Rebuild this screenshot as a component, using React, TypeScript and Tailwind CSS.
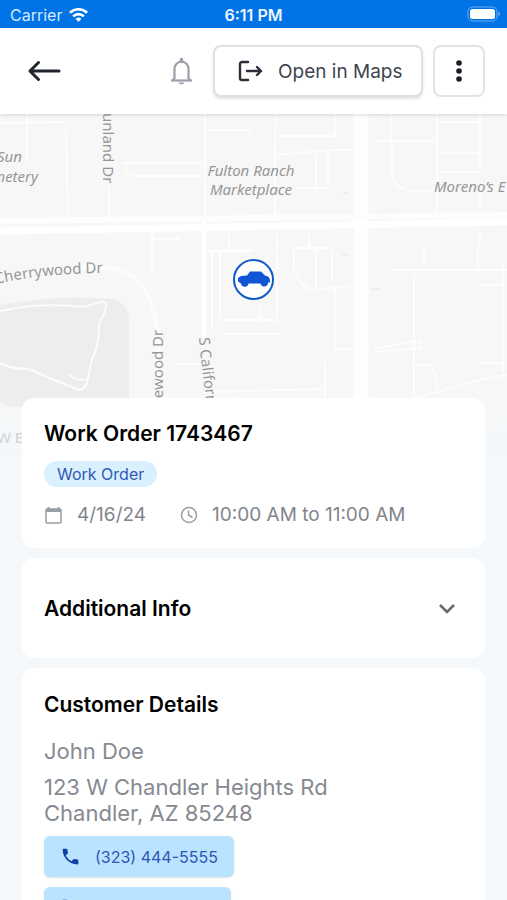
import React from "react";

const PHONE =
  "M6.62 10.79c1.44 2.83 3.76 5.14 6.59 6.59l2.2-2.2c.27-.27.67-.36 1.02-.24 1.12.37 2.33.57 3.57.57.55 0 1 .45 1 1V20c0 .55-.45 1-1 1-9.39 0-17-7.61-17-17 0-.55.45-1 1-1h3.5c.55 0 1 .45 1 1 0 1.25.2 2.45.57 3.57.11.35.03.74-.25 1.02l-2.2 2.2z";

function StatusBar() {
  return (
    <header className="grid h-[28px] shrink-0 grid-cols-3 items-center bg-[#0073e6] px-2.5 text-white">
      <div className="flex items-center gap-1.5 pt-0.5">
        <span className="text-[16px] leading-5 text-[#d5e9fc]">Carrier</span>
        <svg width="21" height="16" viewBox="0 0 22 16" fill="none" stroke="currentColor" strokeWidth="2.8">
          <path d="M2 5.6a13 13 0 0 1 18 0" />
          <path d="M5.4 9.4a8 8 0 0 1 11.2 0" />
          <path d="M11 15.2 8 12.2a4.300 4.300 0 0 1 6 0z" fill="currentColor" stroke="none" />
        </svg>
      </div>
      <time className="pt-0.5 text-center text-[16px] leading-5 font-semibold text-[#eef6ff]">6:11 PM</time>
      <svg className="-mr-1 justify-self-end" width="34" height="16" viewBox="0 0 34 16" aria-label="Battery full">
        <rect x="1" y="1" width="29" height="14" rx="4.500" fill="none" stroke="#6eb0f3" />
        <rect x="3" y="3" width="25" height="10" rx="2.500" fill="#fff" />
        <path d="M31.500 5.500v5c2-1 2-4 0-5z" fill="#6eb0f3" />
      </svg>
    </header>
  );
}

function Toolbar() {
  return (
    <nav className="relative z-10 flex h-[86px] shrink-0 items-center bg-white pr-[22px] pl-[27px] shadow-[0_1px_4px_rgba(0,0,0,0.14)]">
      <button aria-label="Back" className="text-[#20252e]">
        <svg width="35" height="24" viewBox="0 0 35 24" fill="none" stroke="currentColor" strokeWidth="3" strokeLinecap="round" strokeLinejoin="round">
          <path d="M32 12H3M11.500 3.500 3 12l8.500 8.500" />
        </svg>
      </button>
      <button aria-label="Notifications" className="mr-5 ml-auto text-[#9a9fa8]">
        <svg width="24" height="28" viewBox="0 0 24 28" fill="none" stroke="currentColor" strokeWidth="2.200">
          <path d="M5.500 22V12a7 7.500 0 0 1 14 0v10" />
          <path d="M2 23.500h21" strokeWidth="2.200" />
          <path d="M12.500 2.500v2" strokeWidth="3.400" strokeLinecap="round" />
          <path d="M9.500 25.500h6c-.6 2.400-5.400 2.400-6 0z" fill="currentColor" stroke="none" />
          <path d="m5 20-2.500 3.500H6zM20 20l2.500 3.500H19z" fill="currentColor" stroke="none" />
        </svg>
      </button>
      <button className="flex h-[52px] w-[210px] items-center gap-3.5 rounded-lg border-2 border-[#dfe0e3] bg-white pl-[22px] text-[#40454f] shadow-[0_2px_3px_rgba(0,0,0,0.12)]">
        <svg width="27" height="24" viewBox="0 0 27 24" fill="none" stroke="#2a2f39" strokeWidth="2.400" strokeLinecap="round" strokeLinejoin="round">
          <path d="M11 3H5a2 2 0 0 0-2 2v14a2 2 0 0 0 2 2h6M10 12h14M20 8l4 4-4 4" />
        </svg>
        <span className="pt-0.5 text-[19px] leading-6">Open in Maps</span>
      </button>
      <button aria-label="More options" className="ml-2.5 flex h-[52px] w-[52px] items-center justify-center rounded-lg border-2 border-[#e1e2e5] bg-white text-[#191d29]">
        <svg width="8" height="24" viewBox="0 0 8 24" fill="currentColor">
          <circle cx="4" cy="4" r="2.800" />
          <circle cx="4" cy="12" r="2.800" />
          <circle cx="4" cy="20" r="2.800" />
        </svg>
      </button>
    </nav>
  );
}

/* Map coordinates start at the top of the viewport, so the view box begins at y=114. */
function MapView() {
  return (
    <svg className="block h-[342px] w-full" viewBox="0 114 507 342" preserveAspectRatio="xMidYMin slice" role="img" aria-label="Map of the job location">
      <defs>
        <linearGradient id="fade" x1="0" y1="0" x2="0" y2="1">
          <stop offset="0" stopColor="#f4f8fb" stopOpacity="0" />
          <stop offset="0.75" stopColor="#f4f8fb" stopOpacity="0.85" />
          <stop offset="1" stopColor="#f4f8fb" />
        </linearGradient>
        <path id="cherrywood" d="M-4 284Q45 273 108 273" />
        <path id="california" d="M199 338Q202 372 208 412" />
      </defs>
      <rect y="114" width="507" height="342" fill="#f7f7f7" />
      <path d="M0 305Q60 294 112 299Q129 304 129 321V405L18 407Q8 409 0 402Z" fill="#ededed" />
      <g fill="none" stroke="#fff" strokeWidth="2" strokeOpacity="0.75">
        <path d="M0 123 63 122M27 114V160M66 130 68 220M109 186V222M205 114V222M152 232V272M152 239H180M205 130H252M122 163H205M205 176H132Q124 172 126 163M229 235V250H253M205 251H253M212 252V330M220 252V320M220 320H277M260 322V306M277 322V252M277 250V235M220 334H278" />
        <path d="M277 114 275 135V215M275 136H335V114M275 155 335 150H353M328 152V188H298M316 154V187M309 235V248H332V280M294 248V270Q300 286 312 290M294 248H310M316 249V291M312 290 353 286M335 286V349H353M325 362V397M326 389 204 392M175 364H205" />
        <path d="M391 114V140M372 141H437V212M437 114V145M437 153H480M480 122V172H437M480 114V122M437 122H480M392 140V175Q395 190 414 191H437M480 190V212M480 232V243Q474 260 482 270M391 270H507M424 245V270M414 275V397M503 262V372M480 285H503M480 363H503M373 349 415 341H420V348L373 352M415 365H430Q435 368 437 388M415 398 480 380Q495 376 507 375" />
      </g>
      <path d="M80 268Q155 257 158 340V398" fill="none" stroke="#fcfcfc" strokeWidth="4" />
      <path d="M204 220V338" fill="none" stroke="#fff" strokeWidth="4" />
      <path d="M0 311Q40 302 85 307Q103 300 106 303Q107 310 99 324Q99 347 92 359L87 383Q83 392 77 389Q58 382 29 369Q11 369 0 363M69 375Q78 382 88 379" fill="none" stroke="#fcfcfc" strokeWidth="2" />
      <path d="M361 114V400" stroke="#fefefe" strokeWidth="15" />
      <path d="M0 221 507 215" stroke="#fdfdfd" strokeWidth="6" />
      <path d="M0 231 507 222" stroke="#fff" strokeWidth="7" />
      <path d="M343 193h6M342 255h8M370 289h10" stroke="#e5e5e5" strokeWidth="1" />
      <rect y="396" width="507" height="60" fill="url(#fade)" />
      <g fill="#969696" className="font-['Noto_Sans',sans-serif] text-[15px]">
        <g className="italic">
          <text x="-3" y="162">Sun</text>
          <text x="-8" y="182">metery</text>
          <text x="251" y="176" textAnchor="middle">Fulton Ranch</text>
          <text x="251" y="195" textAnchor="middle">Marketplace</text>
          <text x="434" y="192">Moreno’s E</text>
        </g>
        <text><textPath href="#cherrywood">Cherrywood Dr</textPath></text>
        <text><textPath href="#california">S California St</textPath></text>
        <text transform="translate(103 113) rotate(90)">unland Dr</text>
        <text transform="translate(163 402) rotate(-90)">lewood Dr</text>
        <text x="-3" y="443" fill="#d0d3d5">W E</text>
      </g>
      <circle cx="253.500" cy="279.500" r="19.500" fill="#fff" stroke="#1259c8" strokeWidth="2" />
      <path d="M238 278 241 276 247 275.500 250 271.500H261L265 275.500 268 276.500Q270 278 270 280V282.500H268A3.800 3.800 0 0 1 260.500 283.500H248.500A3.800 3.800 0 0 1 241 283.500L238 281.500Z" fill="#0f55d4" />
    </svg>
  );
}

function Card({ className, children }: { className: string; children: React.ReactNode }) {
  return <section className={`rounded-xl bg-white px-[22px] ${className}`}>{children}</section>;
}

function PhoneButton({ number }: { number: string }) {
  return (
    <a
      href={`tel:${number}`}
      className="flex h-[41px] items-center gap-3.5 rounded-md bg-[#b9e3ff] px-4 text-[16px] leading-5 text-[#2d56b4] shadow-[0_1px_2px_rgba(0,0,0,0.12)]"
    >
      <svg width="21" height="21" viewBox="0 0 24 24" fill="#1240a6">
        <path d={PHONE} />
      </svg>
      {number}
    </a>
  );
}

export default function App() {
  return (
    <div className="flex h-screen flex-col overflow-hidden bg-[#f4f8fb] font-['Inter',sans-serif]">
      <StatusBar />
      <Toolbar />
      <main className="min-h-0 flex-1 overflow-y-auto [scrollbar-width:none]">
        <MapView />
        <div className="relative -mt-[58px] flex flex-col gap-2.5 px-[22px]">
          <Card className="flex h-[150px] flex-col items-start pt-[21px]">
            <h1 className="text-[21px] leading-[30px] font-semibold text-black">Work Order 1743467</h1>
            <span className="mt-3 rounded-full bg-[#d9f0ff] px-[13px] text-[16px] leading-[26px] text-[#3159b7]">Work Order</span>
            <div className="mt-4 flex items-center text-[19px] leading-6 text-[#81858c]">
              <svg className="mr-3.5" width="19" height="19" viewBox="0 0 19 19" fill="none" stroke="#999ea6">
                <rect x="2" y="3" width="15" height="14" rx="1" strokeWidth="1.500" />
                <path d="M2 4.500h15" strokeWidth="3" />
                <path d="M4.500 1v3M14.500 1v3" strokeWidth="2" />
              </svg>
              <time>4/16/24</time>
              <svg className="mr-3.5 ml-[34px]" width="18" height="18" viewBox="0 0 18 18" fill="none" stroke="#999ea6" strokeWidth="1.500">
                <circle cx="9" cy="9" r="7.500" />
                <path d="M8.500 4.500V9l4 2.500" />
              </svg>
              <span>10:00 AM to 11:00 AM</span>
            </div>
          </Card>
          <Card className="flex h-[100px] items-center">
            <button className="flex w-full items-center justify-between pt-0.5 pr-1.5">
              <span className="text-[21px] leading-[30px] font-semibold text-black">Additional Info</span>
              <svg width="20" height="14" viewBox="0 0 20 14" fill="none" stroke="#6a6a6a" strokeWidth="2.600">
                <path d="m3 3 7 7 7-7" />
              </svg>
            </button>
          </Card>
          <Card className="pt-[22px] pb-6">
            <h2 className="text-[21px] leading-[30px] font-semibold text-black">Customer Details</h2>
            <p className="mt-[18px] text-[22px] leading-[26px] text-[#868a91]">John Doe</p>
            <address className="mt-2.5 text-[22px] leading-[26px] text-[#868a91] not-italic">
              123 W Chandler Heights Rd
              <br />
              Chandler, AZ 85248
            </address>
            <div className="mt-2.5 flex flex-col items-start gap-2.5">
              <PhoneButton number="(323) 444-5555" />
              <PhoneButton number="(323) 444-5551" />
            </div>
          </Card>
        </div>
      </main>
    </div>
  );
}
